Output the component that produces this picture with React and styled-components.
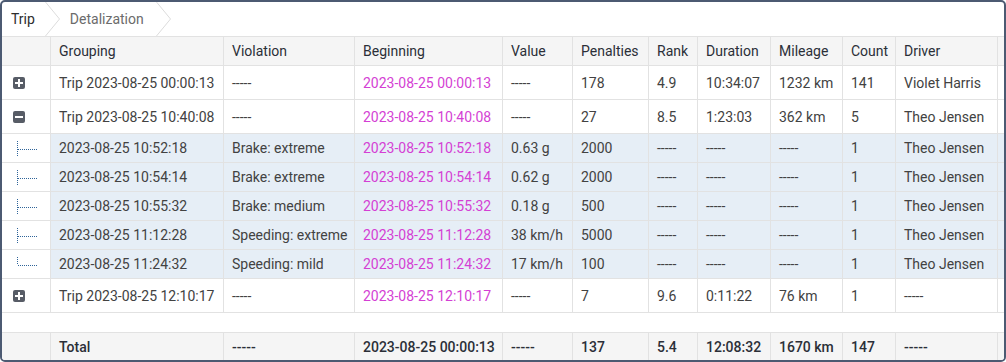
import React from 'react';
import styled, { createGlobalStyle } from 'styled-components';

const GlobalStyle = createGlobalStyle`
    html, body {
        margin: 0;
        padding: 0;
        background: #fff;
    }
    body {
        font-family: Roboto, "Liberation Sans", sans-serif;
        font-size: 14px;
        color: #424242;
    }
`

const COLS = '49px 173px 131px 148px 70px 76px 49px 73px 72px 53px 102px';

const Frame = styled.div`
    box-sizing: border-box;
    width: 1006px;
    height: 362px;
    border: 2px solid #4c5a72;
    border-radius: 5px;
    display: flex;
    flex-direction: column;
    overflow: hidden;
    background: #fff;
`
const Crumbs = styled.div`
    box-sizing: border-box;
    height: 35px;
    border-bottom: 1px solid #e2e2e2;
    display: flex;
    align-items: stretch;
`
const Crumb = styled.div`
    display: flex;
    align-items: center;
    padding-left: ${p => p.$first ? 9 : 10}px;
    color: ${p => p.$active ? '#2d2d2d' : '#6b6b6b'};

    & svg {
        margin-left: ${p => p.$first ? 10 : 12}px;
        display: block;
    }
`
const Row = styled.div`
    box-sizing: border-box;
    display: grid;
    grid-template-columns: ${COLS} ${p => p.$filler ? '1fr' : ''};
    height: ${p => p.$h}px;
    background: ${p => p.$bg || '#fff'};
    border-top: ${p => p.$top ? '1px solid #e2e2e2' : 'none'};
    border-bottom: ${p => p.$bottom ? '1px solid #e2e2e2' : 'none'};
    font-weight: ${p => p.$bold ? 500 : 400};
    color: ${p => p.$dark ? '#2b2f38' : '#424242'};
`
const Cell = styled.div`
    box-sizing: border-box;
    border-right: 1px solid #e2e2e2;
    padding: 0 8px;
    display: flex;
    align-items: center;
    white-space: nowrap;
    overflow: hidden;
    color: ${p => p.$pink ? '#d43fd4' : 'inherit'};
`
const IconCell = styled(Cell)`
    padding: 0 0 0 11px;
    background: #fff;
`
const TreeCell = styled(Cell)`
    padding: 0 0 0 13px;
    align-items: stretch;
    background: #fff;
`
const Body = styled.div`
    flex: 1;
`

const Chevron = () => (
    <svg width="15" height="34" viewBox="0 0 15 34">
        <polyline points="0.5,0 14.5,17 0.5,34" fill="none" stroke="#dcdcdc" strokeWidth="1" />
    </svg>
)

const Toggle = ({ open }) => (
    <svg width="12" height="12" viewBox="0 0 12 12">
        <rect x="0" y="0" width="12" height="12" rx="2" fill="#575c66" />
        <rect x="2" y="5" width="8" height="2" fill="#fff" />
        {!open && <rect x="5" y="2" width="2" height="8" fill="#fff" />}
    </svg>
)

const Branch = ({ last }) => (
    <svg width="24" height="28" viewBox="0 0 24 28">
        <line x1="2.5" y1="7" x2="2.5" y2={last ? 15 : 22} stroke="#2f6499" strokeWidth="1" strokeDasharray="1 1" />
        <line x1="3" y1="15.5" x2="23" y2="15.5" stroke="#2f6499" strokeWidth="1" strokeDasharray="1 1" />
    </svg>
)

const head = ['Grouping', 'Violation', 'Beginning', 'Value', 'Penalties', 'Rank', 'Duration', 'Mileage', 'Count', 'Driver'];

const rows = [
    { type: 'group', open: false, cells: ['Trip 2023-08-25 00:00:13', '-----', '2023-08-25 00:00:13', '-----', '178', '4.9', '10:34:07', '1232 km', '141', 'Violet Harris'] },
    { type: 'group', open: true, cells: ['Trip 2023-08-25 10:40:08', '-----', '2023-08-25 10:40:08', '-----', '27', '8.5', '1:23:03', '362 km', '5', 'Theo Jensen'] },
    { type: 'child', cells: ['2023-08-25 10:52:18', 'Brake: extreme', '2023-08-25 10:52:18', '0.63 g', '2000', '-----', '-----', '-----', '1', 'Theo Jensen'] },
    { type: 'child', cells: ['2023-08-25 10:54:14', 'Brake: extreme', '2023-08-25 10:54:14', '0.62 g', '2000', '-----', '-----', '-----', '1', 'Theo Jensen'] },
    { type: 'child', cells: ['2023-08-25 10:55:32', 'Brake: medium', '2023-08-25 10:55:32', '0.18 g', '500', '-----', '-----', '-----', '1', 'Theo Jensen'] },
    { type: 'child', cells: ['2023-08-25 11:12:28', 'Speeding: extreme', '2023-08-25 11:12:28', '38 km/h', '5000', '-----', '-----', '-----', '1', 'Theo Jensen'] },
    { type: 'child', last: true, cells: ['2023-08-25 11:24:32', 'Speeding: mild', '2023-08-25 11:24:32', '17 km/h', '100', '-----', '-----', '-----', '1', 'Theo Jensen'] },
    { type: 'group', open: false, cells: ['Trip 2023-08-25 12:10:17', '-----', '2023-08-25 12:10:17', '-----', '7', '9.6', '0:11:22', '76 km', '1', '-----'] },
];

const total = ['Total', '-----', '2023-08-25 00:00:13', '-----', '137', '5.4', '12:08:32', '1670 km', '147', '-----'];

const App = () => {
    return (
        <>
            <GlobalStyle />
            <Frame>
                <Crumbs>
                    <Crumb $first $active>Trip<Chevron /></Crumb>
                    <Crumb>Detalization<Chevron /></Crumb>
                </Crumbs>
                <Row $h={29} $bg="#f5f5f5" $bottom $filler $dark>
                    <Cell />
                    {head.map(h => <Cell key={h}>{h}</Cell>)}
                    <div />
                </Row>
                <Body>
                    {rows.map((r, i) => {
                        const child = r.type === 'child';
                        return (
                            <Row key={i} $h={child ? 29 : 34} $bottom $bg={child ? '#e6eef6' : '#fff'}>
                                {child
                                    ? <TreeCell><Branch last={r.last} /></TreeCell>
                                    : <IconCell><Toggle open={r.open} /></IconCell>}
                                {r.cells.map((c, j) => <Cell key={j} $pink={j === 2}>{c}</Cell>)}
                            </Row>
                        )
                    })}
                </Body>
                <Row $h={28} $bg="#f5f5f5" $top $filler $bold $dark>
                    <Cell />
                    {total.map((c, j) => <Cell key={j}>{c}</Cell>)}
                    <div />
                </Row>
            </Frame>
        </>
    )
}

export default App
